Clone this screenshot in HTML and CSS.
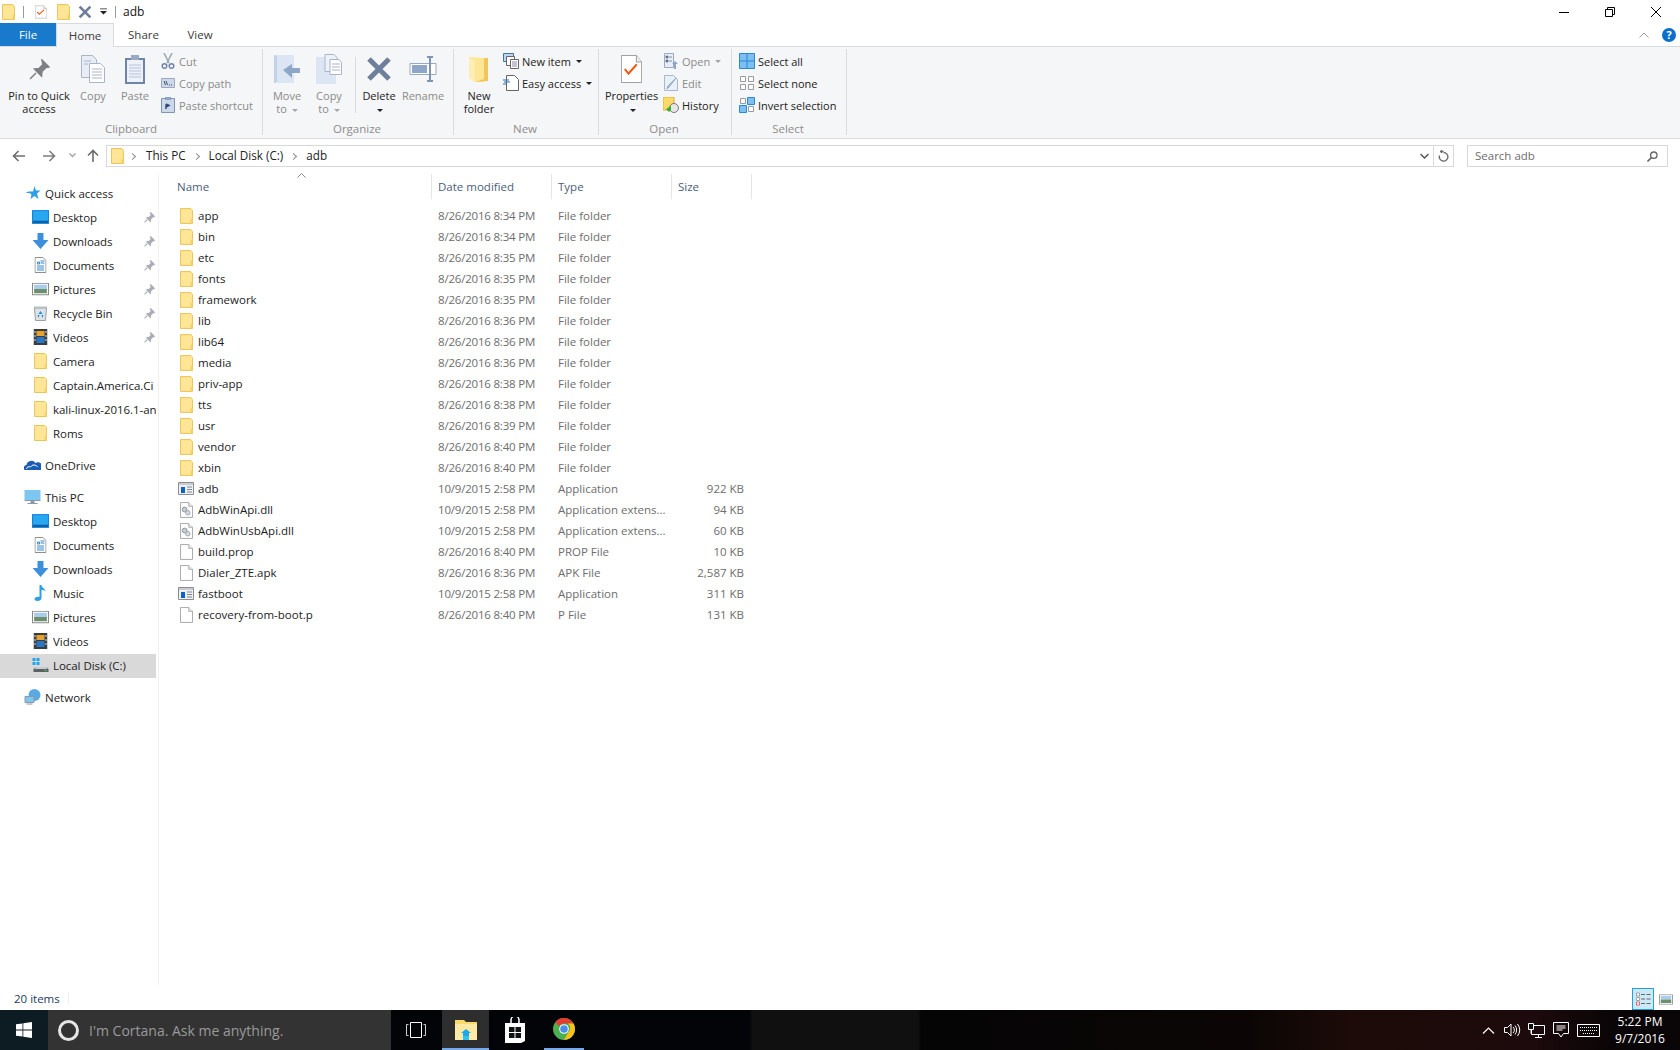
FILE: index.html
```html
<!DOCTYPE HTML>
<html>
<head>
<meta charset="utf-8" />
<title>adb</title>
<link rel="stylesheet" href="styles.css">
</head>
<body>
<svg class="defs" width="0" height="0">
	<symbol id="folder" viewBox="0 0 14 17">
		<path d="M.5.5h11l2 2v14H.5z" fill="#ffe596" stroke="#e8c04e"/>
		<path d="M11.5 11.5h2v5h-2z" fill="#f5d061"/>
	</symbol>
	<symbol id="file" viewBox="0 0 14 17">
		<path d="M.5.5h9l4 4v12H.5z" fill="#fff" stroke="#a3a3a3"/>
		<path d="M9.5.5v4h4" fill="#f0f0f0" stroke="#a3a3a3"/>
	</symbol>
	<symbol id="dll" viewBox="0 0 14 17">
		<path d="M.5.5h9l4 4v12H.5z" fill="#fff" stroke="#a3a3a3"/>
		<path d="M9.5.5v4h4" fill="#f0f0f0" stroke="#a3a3a3"/>
		<circle cx="5" cy="8" r="2.6" fill="#c5ccd4" stroke="#8a929a"/>
		<circle cx="8.4" cy="11.5" r="2.4" fill="#d5dbe2" stroke="#9aa2aa"/>
	</symbol>
	<symbol id="app" viewBox="0 0 16 13">
		<path d="M.5.5h15v12H.5z" fill="#eef0f2" stroke="#8d8d8d"/>
		<path d="M1 1h14v2H1z" fill="#c8ccd0"/>
		<path d="M3 5h4v6H3z" fill="#0a64c8"/>
		<path d="M9 5h5M9 7.5h5M9 10h5" stroke="#7d8a96"/>
	</symbol>
	<symbol id="desktop" viewBox="0 0 16 13">
		<path d="M0 0h16v13H0z" fill="#1383d6"/>
		<path d="M1 1h14v10H1z" fill="#27a8f0"/>
		<path d="M1 10h14v2H1z" fill="#0b5fa5"/>
	</symbol>
	<symbol id="down" viewBox="0 0 16 16">
		<path d="M5 0h6v7h5l-8 9-8-9h5z" fill="#3c8fdc"/>
	</symbol>
	<symbol id="docs" viewBox="0 0 12 16">
		<path d="M.5.5h8l3 3v12H.5z" fill="#fff" stroke="#8f8f8f"/>
		<path d="M3 5h2v2H3zM6 4h4M6 6h4M2.5 9h7M2.5 11h7M2.5 13h7" stroke="#3a87cf" fill="none"/>
	</symbol>
	<symbol id="pics" viewBox="0 0 16 12">
		<path d="M.5.5h15v11H.5z" fill="#fff" stroke="#8a8a8a"/>
		<path d="M2 2h12v4H2z" fill="#a9cdea"/>
		<path d="M2 6h12v4H2z" fill="#6d8f6d"/>
	</symbol>
	<symbol id="recycle" viewBox="0 0 14 16">
		<path d="M1 3h12l-1 12.5H2z" fill="#dfe3e6" stroke="#9a9fa5"/>
		<path d="M.5 1.5h13V3H.5z" fill="#b9bfc4"/>
		<path d="M7 6l2 3H5zM4 10h2l-1 3zM8 10h2l-1 3z" fill="#1f8fd8"/>
	</symbol>
	<symbol id="videos" viewBox="0 0 14 16">
		<path d="M0 0h14v16H0z" fill="#3a3d40"/>
		<path d="M3 2h8v5H3z" fill="#e8a32c"/>
		<path d="M3 8h8v6H3z" fill="#2877c5"/>
		<path d="M1 2h1v2H1zM1 6h1v2H1zM1 10h1v2H1zM12 2h1v2h-1zM12 6h1v2h-1zM12 10h1v2h-1z" fill="#ddd"/>
	</symbol>
	<symbol id="pin" viewBox="0 0 10 10">
		<path d="M6 .5L9.500 4 8 4.500l-2 2-.3 2-3.200-3.200 2-.3 2-2zM3 7L.5 9.500" fill="#a9aeb4" stroke="#a9aeb4"/>
	</symbol>
	<symbol id="big-x" viewBox="0 0 26 26">
		<path d="M3 3l20 20M23 3L3 23" stroke="#6d7f9a" stroke-width="5"/>
	</symbol>
	<symbol id="check-doc" viewBox="0 0 28 30">
		<path d="M.5.5h20l7 7v22H.5z" fill="#fff" stroke="#8d8d8d"/>
		<path d="M20.500.5v7h7" fill="#eee" stroke="#8d8d8d"/>
		<path d="M5 15l5 5 11-10" fill="none" stroke="#f05a14" stroke-width="2.500"/>
	</symbol>
</svg>

<div class="explorer">
	<div class="titlebar">
		<svg class="qa-folder"><use href="#folder"/></svg>
		<span class="qa-sep"></span>
		<svg class="qa-doc"><use href="#check-doc"/></svg>
		<svg class="qa-folder2"><use href="#folder"/></svg>
		<svg class="qa-x"><use href="#big-x"/></svg>
		<svg class="qa-drop" viewBox="0 0 8 7"><path d="M0 0h8v1H0zM0 3h8L4 7z" fill="#222"/></svg>
		<span class="qa-sep2"></span>
		<span class="title-text">adb</span>
		<div class="winbtns">
			<span class="winbtn"><svg width="10" height="10"><path d="M0 5.500h10" stroke="#000"/></svg></span>
			<span class="winbtn"><svg width="10" height="10"><path d="M.5 2.500h7v7h-7zM2.500 2.500v-2h7v7h-2" fill="none" stroke="#000"/></svg></span>
			<span class="winbtn"><svg width="10" height="10"><path d="M0 0l10 10M10 0L0 10" stroke="#000"/></svg></span>
		</div>
	</div>

	<div class="tabs">
		<span class="tab tab-file">File</span>
		<span class="tab tab-home">Home</span>
		<span class="tab tab-share">Share</span>
		<span class="tab tab-view">View</span>
		<span class="tabs-right">
			<svg width="10" height="6"><path d="M.5 5.500L5 1l4.500 4.500" fill="none" stroke="#a0a0a0"/></svg>
			<span class="help">?</span>
		</span>
	</div>

	<div class="ribbon">
		<div class="grp grp-clip">
			<div class="grp-body">
				<div class="big w-pin">
					<span class="ico"><svg width="21" height="21" viewBox="0 0 21 21"><path d="M13 1l7 7-3 .5-4 4-.5 4.500-7-7 4.500-.5 4-4zM7 14l-6 6" fill="#7d8184" stroke="#7d8184" stroke-width="1.500"/></svg></span>
					<span class="dark">Pin to Quick<br>access</span>
				</div>
				<div class="big w-copy">
					<span class="ico"><svg width="24" height="28" viewBox="0 0 24 28"><path d="M.5.5h11l4 4v18H.5z" fill="#e8edf5" stroke="#a9b4c6"/><path d="M8.500 8.500h11l4 4v15h-15z" fill="#fff" stroke="#a9b4c6"/><path d="M11 14h10M11 17h10M11 20h10M11 23h10M3 6h7M3 9h4" stroke="#a9b4c6"/></svg></span>
					<span>Copy</span>
				</div>
				<div class="big w-paste">
					<span class="ico"><svg width="20" height="29" viewBox="0 0 20 29"><path d="M0 3h20v26H0z" fill="#6f85a8"/><path d="M2 5h16v22H2z" fill="#eef2f8"/><path d="M6 0h8v5H6z" fill="#9aa9c0"/><path d="M4 10h12M4 13h12M4 16h12M4 19h12M4 22h12" stroke="#b6c3d8"/></svg></span>
					<span>Paste</span>
				</div>
				<div class="smallcol">
					<div class="small"><svg width="14" height="16" viewBox="0 0 14 16"><path d="M3 0l5 10M11 0L6 10" stroke="#9aa4b2" stroke-width="1.500"/><circle cx="3.500" cy="13" r="2.300" fill="none" stroke="#6f85a8" stroke-width="1.500"/><circle cx="10.500" cy="13" r="2.300" fill="none" stroke="#6f85a8" stroke-width="1.500"/></svg>Cut</div>
					<div class="small"><svg width="14" height="10" viewBox="0 0 14 10"><path d="M.5.5h13v9H.5z" fill="#cdd8ea" stroke="#9aa9c0"/><path d="M3 3l1.500 4M5 3l1.500 4M8 7h1M10 7h1" stroke="#44546a"/></svg>Copy path</div>
					<div class="small"><svg width="14" height="16" viewBox="0 0 14 16"><path d="M.5 1.500h13v14H.5z" fill="#cdd8ea" stroke="#7f93b2"/><path d="M4 0h6v3H4z" fill="#8fa2be"/><path d="M5 12V8h3M6 7.500l2 1-2 1z" stroke="#2f4a74" fill="none" stroke-width="1.500"/></svg>Paste shortcut</div>
				</div>
			</div>
			<div class="grp-label">Clipboard</div>
		</div>

		<div class="grp grp-org">
			<div class="grp-body">
				<div class="big w-move">
					<span class="ico"><svg width="26" height="28" viewBox="0 0 26 28"><path d="M0 0h20v28H0z" fill="#dbe5f3"/><path d="M0 0l3 1v26l-3 1z" fill="#c3d2e8"/><path d="M26 18h-8v5l-9-8 9-6v4h8z" fill="#8ea6c8"/></svg></span>
					<span>Move<br>to <i class="caret"></i></span>
				</div>
				<div class="big w-move">
					<span class="ico"><svg width="26" height="30" viewBox="0 0 26 30"><path d="M0 3h20v27H0z" fill="#dbe5f3"/><path d="M9 .5h9l3 3v14H9z" fill="#eef2f8" stroke="#a9b4c6"/><path d="M14 5.500h9l2.500 3v12H14z" fill="#fff" stroke="#a9b4c6"/><path d="M16 10h8M16 13h8M16 16h8" stroke="#a9b4c6"/></svg></span>
					<span>Copy<br>to <i class="caret"></i></span>
				</div>
				<span class="inner-sep"></span>
				<div class="big w-del">
					<span class="ico"><svg width="26" height="26"><use href="#big-x"/></svg></span>
					<span class="dark">Delete<br><i class="caret dark-caret"></i></span>
				</div>
				<div class="big w-move">
					<span class="ico"><svg width="28" height="26" viewBox="0 0 28 26"><path d="M1 7.500h26v11H1z" fill="#fff" stroke="#9aa9c0"/><path d="M3 9h15v8H3z" fill="#8ea6c8"/><path d="M18 1h6M18 25h6M21 1v24" stroke="#7f93b2" stroke-width="2"/></svg></span>
					<span>Rename</span>
				</div>
			</div>
			<div class="grp-label">Organize</div>
		</div>

		<div class="grp grp-new">
			<div class="grp-body">
				<div class="big w-newf">
					<span class="ico"><svg width="20" height="27" viewBox="0 0 20 27"><path d="M0 1l15 1v24H6l-6-4z" fill="#ffe596"/><path d="M15 2h4v23l-13 1 9-3z" fill="#f0c658"/><path d="M0 1l6 4v21l-6-4z" fill="#ffeeb4"/></svg></span>
					<span class="dark">New<br>folder</span>
				</div>
				<div class="smallcol">
					<div class="small dark"><svg width="16" height="16" viewBox="0 0 16 16"><path d="M.5.5h10v8H.5z" fill="#bcd8f0" stroke="#44729c"/><path d="M3.500 3.500h8v9h-8z" fill="#fff" stroke="#666"/><path d="M7.500 6.500h8v9h-8z" fill="#fff" stroke="#666"/><path d="M9 9h5M9 11h5M9 13h5" stroke="#88a"/></svg>New item <i class="caret dark-caret"></i></div>
					<div class="small dark"><svg width="16" height="16" viewBox="0 0 16 16"><path d="M3.500.5h8l4 4v11h-12z" fill="#fff" stroke="#666"/><path d="M0 5h6M1 7h6M0 9h4" stroke="#2f6fb0"/></svg>Easy access <i class="caret dark-caret"></i></div>
				</div>
			</div>
			<div class="grp-label">New</div>
		</div>

		<div class="grp grp-open">
			<div class="grp-body">
				<div class="big w-prop">
					<span class="ico"><svg width="21" height="28" viewBox="0 0 28 30" preserveAspectRatio="none"><use href="#check-doc"/></svg></span>
					<span class="dark">Properties<br><i class="caret dark-caret"></i></span>
				</div>
				<div class="smallcol">
					<div class="small"><svg width="14" height="16" viewBox="0 0 14 16"><path d="M.5.500h9v14h-9z" fill="#e8edf5" stroke="#9aa9c0"/><path d="M2 3h2v2H2zM2 7h2v2H2zM5 4h3M5 8h3" stroke="#7f93b2"/><path d="M11 8l3 3h-2v5h-2v-5H8z" fill="#8ea6c8"/></svg>Open <i class="caret"></i></div>
					<div class="small"><svg width="14" height="16" viewBox="0 0 14 16"><path d="M.5.5h9l4 4v11H.5z" fill="#eaf0f8" stroke="#a9b8d0"/><path d="M12 3L5 12l-2 2 1-3z" fill="#b9c8de" stroke="#8ea6c8"/></svg>Edit</div>
					<div class="small dark"><svg width="16" height="16" viewBox="0 0 16 16"><path d="M0 0h11v13H0z" fill="#ffd966" stroke="#d6ae3c"/><circle cx="11" cy="11" r="4.500" fill="#e6e6e6" stroke="#777"/><path d="M8 9l-5 3 3 3 2-2" fill="#3aa935"/></svg>History</div>
				</div>
			</div>
			<div class="grp-label">Open</div>
		</div>

		<div class="grp grp-sel">
			<div class="grp-body">
				<div class="smallcol">
					<div class="small dark"><svg width="16" height="16" viewBox="0 0 16 16"><path d="M.5.5h15v15H.5zM8 0v16M0 8h16" fill="#7cc0f0" stroke="#2b87d8"/></svg>Select all</div>
					<div class="small dark"><svg width="16" height="16" viewBox="0 0 16 16"><path d="M1.500 1.500h5v5h-5zM9.500 1.500h5v5h-5zM1.500 9.500h5v5h-5zM9.500 9.500h5v5h-5z" fill="#fff" stroke="#9a9a9a"/></svg>Select none</div>
					<div class="small dark"><svg width="16" height="16" viewBox="0 0 16 16"><path d="M1.500 1.500h5v5h-5zM9.500 9.500h5v5h-5z" fill="#fff" stroke="#9a9a9a"/><path d="M8.500.5h7v7h-7zM.5 8.500h7v7h-7z" fill="#7cc0f0" stroke="#2b87d8"/></svg>Invert selection</div>
				</div>
			</div>
			<div class="grp-label">Select</div>
		</div>
	</div>

	<div class="addrrow">
		<div class="navbtns">
			<svg class="nb-back" width="14" height="12" viewBox="0 0 14 12"><path d="M13 6H2M6.500 1L1.500 6l5 5" fill="none" stroke="#6d6d6d" stroke-width="1.600"/></svg>
			<svg class="nb-fwd" width="14" height="12" viewBox="0 0 14 12"><path d="M1 6h11M7.500 1l5 5-5 5" fill="none" stroke="#7d7d7d" stroke-width="1.600"/></svg>
			<svg class="nb-down" width="7" height="5" viewBox="0 0 7 5"><path d="M.5.500l3 3 3-3" fill="none" stroke="#a0a0a0" stroke-width="1.300"/></svg>
			<svg class="nb-up" width="12" height="14" viewBox="0 0 12 14"><path d="M6 13V2M1 6.500l5-5 5 5" fill="none" stroke="#6d6d6d" stroke-width="1.600"/></svg>
		</div>
		<div class="addrbox">
			<svg class="addr-folder"><use href="#folder"/></svg>
			<i class="crumb-sep first"></i><span class="crumb">This PC</span>
			<i class="crumb-sep"></i><span class="crumb">Local Disk (C:)</span>
			<i class="crumb-sep"></i><span class="crumb">adb</span>
			<span class="addr-fill"></span>
			<svg class="addr-chev" width="9" height="6" viewBox="0 0 9 6"><path d="M.5 1l4 4 4-4" fill="none" stroke="#555" stroke-width="1.500"/></svg>
			<span class="addr-refresh"><svg width="11" height="12" viewBox="0 0 11 12"><path d="M2 1.500h3.500M3.500 0v3M5.500 2.500a4.300 4.300 0 1 1-4 3" fill="none" stroke="#6d6d6d" stroke-width="1.400"/></svg></span>
		</div>
		<div class="searchbox">
			<span>Search adb</span>
			<svg width="11" height="11" viewBox="0 0 11 11"><circle cx="6.800" cy="4.200" r="3.200" fill="none" stroke="#666" stroke-width="1.300"/><path d="M4.500 6.500L.5 10.500" stroke="#666" stroke-width="1.600"/></svg>
		</div>
	</div>

	<div class="main">
		<div class="navpane">
			<div class="navgroup">
				<div class="nav top"><svg viewBox="0 0 16 16"><path d="M10 1l1.500 4.500H16L12.500 8.500 14 14l-4-3-4 3 1-4.500-2-1.500H1l3-1.500h4.500z" fill="#2e9fe6"/></svg>Quick access</div>
				<div class="nav"><svg viewBox="0 0 16 13"><use href="#desktop"/></svg><span>Desktop</span><svg class="pin"><use href="#pin"/></svg></div>
				<div class="nav"><svg viewBox="0 0 16 16"><use href="#down"/></svg><span>Downloads</span><svg class="pin"><use href="#pin"/></svg></div>
				<div class="nav"><svg viewBox="0 0 12 16"><use href="#docs"/></svg><span>Documents</span><svg class="pin"><use href="#pin"/></svg></div>
				<div class="nav"><svg viewBox="0 0 16 12"><use href="#pics"/></svg><span>Pictures</span><svg class="pin"><use href="#pin"/></svg></div>
				<div class="nav"><svg viewBox="0 0 14 16"><use href="#recycle"/></svg><span>Recycle Bin</span><svg class="pin"><use href="#pin"/></svg></div>
				<div class="nav"><svg viewBox="0 0 14 16"><use href="#videos"/></svg><span>Videos</span><svg class="pin"><use href="#pin"/></svg></div>
				<div class="nav"><svg viewBox="0 0 14 17"><use href="#folder"/></svg><span>Camera</span></div>
				<div class="nav"><svg viewBox="0 0 14 17"><use href="#folder"/></svg><span>Captain.America.Ci</span></div>
				<div class="nav"><svg viewBox="0 0 14 17"><use href="#folder"/></svg><span>kali-linux-2016.1-an</span></div>
				<div class="nav"><svg viewBox="0 0 14 17"><use href="#folder"/></svg><span>Roms</span></div>
			</div>
			<div class="navgroup">
				<div class="nav top"><svg viewBox="0 0 16 16"><path d="M0 13a3 3 0 0 1 2-5 5 5 0 0 1 9-2 4 4 0 0 1 5 7z" fill="#1a5bb5"/><path d="M2 12a3 3 0 0 1 4-2 4 4 0 0 1 7 0" fill="none" stroke="#fff"/></svg>OneDrive</div>
			</div>
			<div class="navgroup">
				<div class="nav top"><svg viewBox="0 0 16 16"><path d="M0 1h16v10H0z" fill="#7cc6ef"/><path d="M0 11h16v1H0zM6 12h4v2H6z" fill="#8a9aa8"/><path d="M3 14.500h10" stroke="#8a9aa8"/></svg>This PC</div>
				<div class="nav"><svg viewBox="0 0 16 13"><use href="#desktop"/></svg><span>Desktop</span></div>
				<div class="nav"><svg viewBox="0 0 12 16"><use href="#docs"/></svg><span>Documents</span></div>
				<div class="nav"><svg viewBox="0 0 16 16"><use href="#down"/></svg><span>Downloads</span></div>
				<div class="nav"><svg viewBox="0 0 16 16"><path d="M7 0h2c0 3 4 3 4 7-1-2-2-2-4-2v8c0 2-2 3-4 3s-3-1-3-2 2-3 5-2z" fill="#2ba0e8"/></svg><span>Music</span></div>
				<div class="nav"><svg viewBox="0 0 16 12"><use href="#pics"/></svg><span>Pictures</span></div>
				<div class="nav"><svg viewBox="0 0 14 16"><use href="#videos"/></svg><span>Videos</span></div>
				<div class="nav selected"><svg viewBox="0 0 16 16"><path d="M0 1h3v3H0zM4 1h3v3H4zM0 5h3v3H0zM4 5h3v3H4z" fill="#1ea7ee"/><path d="M1 12l2-2h11l2 2v3H1z" fill="#5d6266"/><path d="M3 10h11l1 2H2z" fill="#c9ccce"/><path d="M12 13h2v1h-2z" fill="#3ed03e"/></svg><span>Local Disk (C:)</span></div>
			</div>
			<div class="navgroup">
				<div class="nav top"><svg viewBox="0 0 16 16"><circle cx="10" cy="6" r="6" fill="#5aa9e0"/><path d="M.5 7.500h9v6h-9z" fill="#7cc6ef" stroke="#8a9aa8"/><path d="M2 15h6" stroke="#8a9aa8"/></svg>Network</div>
			</div>
		</div>

		<div class="files">
			<div class="filehead">
				<span class="col col-name">Name<svg class="sort" width="9" height="5" viewBox="0 0 9 5"><path d="M.5 4.500l4-4 4 4" fill="none" stroke="#8a8a8a"/></svg></span>
				<span class="col col-date">Date modified</span>
				<span class="col col-type">Type</span>
				<span class="col col-size">Size</span>
			</div>
			<div class="filelist">
				<div class="row"><span class="col-name"><svg><use href="#folder"/></svg>app</span><span class="col-date">8/26/2016 8:34 PM</span><span class="col-type">File folder</span><span class="col-size"></span></div>
				<div class="row"><span class="col-name"><svg><use href="#folder"/></svg>bin</span><span class="col-date">8/26/2016 8:34 PM</span><span class="col-type">File folder</span><span class="col-size"></span></div>
				<div class="row"><span class="col-name"><svg><use href="#folder"/></svg>etc</span><span class="col-date">8/26/2016 8:35 PM</span><span class="col-type">File folder</span><span class="col-size"></span></div>
				<div class="row"><span class="col-name"><svg><use href="#folder"/></svg>fonts</span><span class="col-date">8/26/2016 8:35 PM</span><span class="col-type">File folder</span><span class="col-size"></span></div>
				<div class="row"><span class="col-name"><svg><use href="#folder"/></svg>framework</span><span class="col-date">8/26/2016 8:35 PM</span><span class="col-type">File folder</span><span class="col-size"></span></div>
				<div class="row"><span class="col-name"><svg><use href="#folder"/></svg>lib</span><span class="col-date">8/26/2016 8:36 PM</span><span class="col-type">File folder</span><span class="col-size"></span></div>
				<div class="row"><span class="col-name"><svg><use href="#folder"/></svg>lib64</span><span class="col-date">8/26/2016 8:36 PM</span><span class="col-type">File folder</span><span class="col-size"></span></div>
				<div class="row"><span class="col-name"><svg><use href="#folder"/></svg>media</span><span class="col-date">8/26/2016 8:36 PM</span><span class="col-type">File folder</span><span class="col-size"></span></div>
				<div class="row"><span class="col-name"><svg><use href="#folder"/></svg>priv-app</span><span class="col-date">8/26/2016 8:38 PM</span><span class="col-type">File folder</span><span class="col-size"></span></div>
				<div class="row"><span class="col-name"><svg><use href="#folder"/></svg>tts</span><span class="col-date">8/26/2016 8:38 PM</span><span class="col-type">File folder</span><span class="col-size"></span></div>
				<div class="row"><span class="col-name"><svg><use href="#folder"/></svg>usr</span><span class="col-date">8/26/2016 8:39 PM</span><span class="col-type">File folder</span><span class="col-size"></span></div>
				<div class="row"><span class="col-name"><svg><use href="#folder"/></svg>vendor</span><span class="col-date">8/26/2016 8:40 PM</span><span class="col-type">File folder</span><span class="col-size"></span></div>
				<div class="row"><span class="col-name"><svg><use href="#folder"/></svg>xbin</span><span class="col-date">8/26/2016 8:40 PM</span><span class="col-type">File folder</span><span class="col-size"></span></div>
				<div class="row"><span class="col-name"><svg class="wide" viewBox="0 0 16 13"><use href="#app"/></svg>adb</span><span class="col-date">10/9/2015 2:58 PM</span><span class="col-type">Application</span><span class="col-size">922 KB</span></div>
				<div class="row"><span class="col-name"><svg><use href="#dll"/></svg>AdbWinApi.dll</span><span class="col-date">10/9/2015 2:58 PM</span><span class="col-type">Application extens...</span><span class="col-size">94 KB</span></div>
				<div class="row"><span class="col-name"><svg><use href="#dll"/></svg>AdbWinUsbApi.dll</span><span class="col-date">10/9/2015 2:58 PM</span><span class="col-type">Application extens...</span><span class="col-size">60 KB</span></div>
				<div class="row"><span class="col-name"><svg><use href="#file"/></svg>build.prop</span><span class="col-date">8/26/2016 8:40 PM</span><span class="col-type">PROP File</span><span class="col-size">10 KB</span></div>
				<div class="row"><span class="col-name"><svg><use href="#file"/></svg>Dialer_ZTE.apk</span><span class="col-date">8/26/2016 8:36 PM</span><span class="col-type">APK File</span><span class="col-size">2,587 KB</span></div>
				<div class="row"><span class="col-name"><svg class="wide" viewBox="0 0 16 13"><use href="#app"/></svg>fastboot</span><span class="col-date">10/9/2015 2:58 PM</span><span class="col-type">Application</span><span class="col-size">311 KB</span></div>
				<div class="row"><span class="col-name"><svg><use href="#file"/></svg>recovery-from-boot.p</span><span class="col-date">8/26/2016 8:40 PM</span><span class="col-type">P File</span><span class="col-size">131 KB</span></div>
			</div>
		</div>
	</div>

	<div class="statusbar">
		<span class="count">20 items</span>
		<span class="status-fill"></span>
		<span class="view-btn on"><svg width="16" height="14" viewBox="0 0 16 14"><path d="M1.500 1h3v3h-3zM1.500 5.500h3v3h-3z" fill="#fff" stroke="#888" stroke-width=".7"/><path d="M1.500 10h3v3h-3z" fill="#fff" stroke="#d33" stroke-width=".7"/><path d="M6 2.500h4M11.500 2.500h4M6 7h4M11.500 7h4M6 11.500h4M11.500 11.500h4" stroke="#666"/></svg></span>
		<span class="view-btn"><svg width="14" height="11" viewBox="0 0 16 12"><use href="#pics"/></svg></span>
	</div>
</div>

<div class="taskbar">
	<span class="start"><svg width="16" height="16" viewBox="0 0 16 16"><path d="M0 2.300l6.500-.9v6.200H0zM7.300 1.300L16 0v7.600H7.300zM0 8.400h6.500v6.200L0 13.700zM7.300 8.400H16V16l-8.700-1.300z" fill="#fff"/></svg></span>
	<div class="cortana">
		<span class="ring"></span>
		<span>I'm Cortana. Ask me anything.</span>
	</div>
	<span class="tb-btn tb-view"><svg width="20" height="16" viewBox="0 0 20 16"><path d="M4.500.5h11v15h-11z" fill="none" stroke="#fff"/><path d="M2.500 2.500H.5v11h2M17.500 2.500h2v11h-2" fill="none" stroke="#ccc"/></svg></span>
	<span class="tb-btn tb-explorer"><svg width="22" height="21" viewBox="0 0 22 21"><path d="M0 1h9l2 2h11v18H0z" fill="#f9d86c"/><path d="M0 5h22v16H0z" fill="#ffe9a4"/><path d="M6 14l5-4 5 4h-2v7H8v-7z" fill="#1ea7e8"/><path d="M8 17h6v4H8z" fill="#29c3f4"/></svg></span>
	<span class="tb-btn tb-store"><svg width="20" height="26" viewBox="0 0 20 26"><path d="M6 7V3a4 4 0 0 1 8 0v4" fill="none" stroke="#fff" stroke-width="1.500"/><path d="M0 6h20v18l-4 2H0z" fill="#fff"/><path d="M4 10h5.500v5H4zM10.500 10H16v5h-5.500zM4 16h5.500v5H4zM10.500 16H16v5h-5.500z" fill="#111"/></svg></span>
	<span class="tb-btn tb-chrome"><svg width="22" height="22" viewBox="0 0 22 22"><circle cx="11" cy="11" r="11" fill="#4caf50"/><path d="M11 0a11 11 0 0 1 9.500 5.500H11a5.500 5.500 0 0 0-5 3L2.500 3.800A11 11 0 0 1 11 0z" fill="#e53b30"/><path d="M20.500 5.500A11 11 0 0 1 11 22l4.700-8.300A5.500 5.500 0 0 0 15 5.500z" fill="#fbc116"/><circle cx="11" cy="11" r="4.800" fill="#fff"/><circle cx="11" cy="11" r="3.800" fill="#4a8cf0"/></svg></span>
	<span class="tb-fill"></span>
	<div class="tray">
		<svg class="tr-up" width="13" height="7" viewBox="0 0 13 7"><path d="M1 6.500L6.500 1 12 6.500" fill="none" stroke="#fff" stroke-width="1.200"/></svg>
		<svg class="tr-vol" width="17" height="14" viewBox="0 0 17 14"><path d="M.5 4.500h3L7 1v12L3.500 9.500h-3zM9 4a4 4 0 0 1 0 6M11 2.500a7 7 0 0 1 0 9M13.500 1a10 10 0 0 1 0 12" fill="none" stroke="#fff"/></svg>
		<svg class="tr-net" width="17" height="15" viewBox="0 0 17 15"><path d="M3.500 2.500h13v9h-13zM7 14.500h7M10.500 11.500v3" fill="none" stroke="#fff"/><path d="M.5.500h5v6h-5zM3 6.500v4" fill="#111" stroke="#fff"/></svg>
		<svg class="tr-msg" width="16" height="16" viewBox="0 0 16 16"><path d="M.5.500h15v11h-5L8 15l-2.500-3.500h-5zM3.500 4h9M3.500 6h9M3.500 8h6" fill="none" stroke="#fff"/></svg>
		<svg class="tr-kbd" width="23" height="13" viewBox="0 0 23 13"><path d="M.5.500h22v12H.5z" fill="none" stroke="#fff"/><path d="M3 3.500h17M3 6.500h17M6 9.500h11" stroke="#fff" stroke-dasharray="1 1"/></svg>
		<div class="clock">5:22 PM<br>9/7/2016</div>
	</div>
</div>
</body>
</html>
```
FILE: styles.css
```css
html,body{margin:0;padding:0;height:100%;overflow:hidden;}
body{
	font-family:"Open Sans","Noto Sans","Liberation Sans",sans-serif;
	font-size:11.5px;
	color:#1c1c1c;
	background:#fff;
}
.defs{position:absolute;}
svg{display:block;flex:none;}
i{font-style:normal;}

.explorer{height:1010px;display:flex;flex-direction:column;}

/* title bar */
.titlebar{height:23px;display:flex;align-items:center;flex:none;}
.qa-folder{width:13px;height:16px;margin-left:2px;}
.qa-sep{width:1px;height:12px;background:#9a9a9a;margin-left:8px;}
.qa-doc{width:12px;height:16px;margin-left:11px;}
.qa-folder2{width:13px;height:16px;margin-left:10px;}
.qa-x{width:14px;height:14px;margin-left:8px;}
.qa-drop{width:7px;height:7px;margin-left:8px;}
.qa-sep2{width:1px;height:12px;background:#9a9a9a;margin-left:8px;}
.title-text{margin-left:7px;font-size:12px;color:#111;}
.winbtns{margin-left:auto;display:flex;height:100%;padding-right:1px;}
.winbtn{width:46px;display:flex;align-items:center;justify-content:center;}

/* tabs */
.tabs{height:23px;display:flex;flex:none;align-items:stretch;border-bottom:1px solid #dadbdc;position:relative;}
.tab{display:flex;align-items:center;justify-content:center;color:#3b3b3b;}
.tab-file{width:56px;background:#1979ca;color:#fff;}
.tab-home{width:56px;background:#f5f6f7;border:1px solid #dadbdc;border-bottom:0;margin-bottom:-1px;}
.tab-share{width:59px;}
.tab-view{width:54px;}
.tabs-right{margin-left:auto;display:flex;align-items:center;gap:13px;padding-right:4px;}
.help{width:14px;height:14px;border-radius:50%;background:#0d6fc9;color:#fff;font-weight:700;font-size:11px;line-height:14px;text-align:center;}

/* ribbon */
.ribbon{height:91px;flex:none;display:flex;background:#f5f6f7;border-bottom:1px solid #dadbdc;font-size:11px;}
.grp{display:flex;flex-direction:column;margin-top:2px;height:86px;border-right:1px solid #dadbdc;box-sizing:border-box;color:#8a8a8a;}
.grp-clip{width:263px;}
.grp-org{width:191px;}
.grp-new{width:145px;}
.grp-open{width:133px;}
.grp-sel{width:115px;}
.grp-body{height:73px;display:flex;padding-left:4px;}
.grp-org .grp-body{padding-left:3px;}
.grp-new .grp-body{padding-left:5px;}
.grp-sel .grp-body{padding-left:3px;}
.grp-label{height:13px;line-height:14px;text-align:center;font-size:11.5px;color:#8d8d8d;padding-right:2px;}
.grp-clip .grp-label{padding-right:0;}
.big{display:flex;flex-direction:column;align-items:center;line-height:13px;text-align:center;}
.ico{height:40px;display:flex;align-items:center;justify-content:center;}
.big span{color:#8a8a8a;white-space:nowrap;}
.big span.dark,.small.dark{color:#222;}
.w-pin{width:70px;}
.w-copy{width:38px;}
.w-paste{width:46px;}
.w-move{width:42px;}
.w-del{width:46px;}
.w-newf{width:40px;}
.w-prop{width:57px;}
.inner-sep{width:1px;height:56px;background:#dadbdc;margin:8px 0 0 5px;}
.smallcol{display:flex;flex-direction:column;padding-top:1px;padding-left:2px;}
.grp-new .smallcol{padding-left:4px;}
.grp-open .smallcol{padding-left:3px;}
.grp-sel .smallcol{padding-left:4px;}
.small{height:22px;display:flex;align-items:center;gap:3px;white-space:nowrap;color:#8a8a8a;}
.small svg{width:16px;}
.caret{display:inline-block;width:0;height:0;border:3px solid transparent;border-top:3px solid #a5a5a5;border-bottom:0;vertical-align:middle;margin-left:2px;}
.dark-caret{border-top-color:#222;}

/* address row */
.addrrow{height:34px;flex:none;display:flex;align-items:flex-start;padding-top:6px;box-sizing:border-box;}
.navbtns{width:106px;flex:none;display:flex;align-items:center;height:21px;}
.nb-back{margin-left:12px;}
.nb-fwd{margin-left:16px;}
.nb-down{margin-left:13px;}
.nb-up{margin-left:11px;}
.addrbox{width:1348px;height:22px;border:1px solid #d9d9d9;box-sizing:border-box;display:flex;align-items:center;}
.addr-folder{width:13px;height:16px;margin-left:4px;}
.crumb-sep{width:4px;height:4px;border-top:1.5px solid #8c8c8c;border-right:1.5px solid #8c8c8c;transform:rotate(45deg);margin:0 10px 0 8px;}
.crumb-sep.first{margin:0 11px 0 6px;}
.crumb{color:#222;font-size:11.7px;padding-bottom:2px;}
.addr-fill{flex:1;}
.addr-chev{margin-right:4px;}
.addr-refresh{width:19px;height:20px;border-left:1px solid #d9d9d9;display:flex;align-items:center;justify-content:center;}
.searchbox{width:201px;height:22px;margin-left:13px;border:1px solid #d9d9d9;box-sizing:border-box;display:flex;align-items:center;justify-content:space-between;padding:0 9px 0 7px;color:#6d6d6d;}
.searchbox span{padding-bottom:1px;}

/* main */
.main{flex:1;display:flex;min-height:0;}
.navpane{width:158px;flex:none;border-right:1px solid #f0f0f0;padding-top:9px;margin-bottom:3px;}
.navgroup{margin-bottom:8px;}
.nav{height:24px;display:flex;align-items:center;padding:0 0 2px 32px;color:#1c1c1c;white-space:nowrap;overflow:hidden;width:156px;box-sizing:border-box;}
.nav>svg:first-child{width:17px;height:16px;margin-right:4px;}
.nav span{overflow:hidden;width:103px;letter-spacing:-.05px;}
.nav.top{padding-left:24px;}
.nav .pin{width:11px;height:11px;margin-left:-12px;}
.nav.selected{background:#d9d9d9;}

.files{flex:1;}
.filehead{height:27px;display:flex;padding-top:1px;color:#4c607a;box-sizing:border-box;}
.filehead .col{height:25px;display:flex;align-items:center;border-right:1px solid #e5e5e5;box-sizing:border-box;position:relative;}
.col-name{width:273px;padding-left:18px;box-sizing:border-box;}
.col-date{width:120px;padding-left:6px;box-sizing:border-box;}
.col-type{width:120px;padding-left:6px;box-sizing:border-box;}
.col-size{width:80px;padding-right:8px;text-align:right;box-sizing:border-box;}
.filehead .col-size{padding-left:6px;text-align:left;}
.sort{position:absolute;left:138px;top:-1px;}
.filelist{padding-top:5px;}
.row{height:21px;display:flex;align-items:center;color:#6d6d6d;}
.row .col-date{letter-spacing:-.2px;}
.row .col-name{display:flex;align-items:center;color:#1c1c1c;padding-left:21px;white-space:nowrap;}
.row .col-name svg{width:13px;height:16px;margin-right:5px;}
.row .col-name svg.wide{width:16px;height:13px;margin:0 4px 0 -2px;}

.statusbar{height:22px;flex:none;display:flex;align-items:center;color:#1c3a5a;}
.count{padding-left:14px;width:54px;border-right:1px solid #eee;height:12px;line-height:12px;}
.status-fill{flex:1;}
.view-btn{width:22px;height:22px;display:flex;align-items:center;justify-content:center;box-sizing:border-box;margin-right:2px;}
.view-btn:last-child{width:20px;margin-right:4px;}
.view-btn.on{background:#cbe8f6;border:1px solid #26a0da;}

/* taskbar */
.taskbar{height:40px;display:flex;align-items:stretch;color:#fff;background:linear-gradient(90deg,#020408 0,#020408 750px,#101010 752px,#101010 918px,#050505 921px,#0b0605 1250px,#1c0b08 1350px,#1d0a0c 1530px,#0a0506 1610px);}
.start{width:48px;display:flex;align-items:center;justify-content:center;background:#0d1b22;}
.cortana{width:343px;background:#333;display:flex;align-items:center;color:#9a9a9a;font-size:14px;}
.ring{width:15px;height:15px;border:3px solid #e6e6e6;border-radius:50%;margin:0 10px 0 10px;}
.tb-btn{display:flex;align-items:center;justify-content:center;box-sizing:border-box;}
.tb-view{width:51px;padding-right:2px;}
.tb-explorer{width:47px;background:#2e2e2e;border-bottom:2px solid #76a9ea;}
.tb-store{width:55px;padding-right:3px;}
.tb-chrome{width:40px;border-bottom:2px solid #76a9ea;}
.tb-fill{flex:1;}
.tray{display:flex;align-items:center;gap:9px;padding-right:8px;}
.tr-net{margin-left:-2px;}
.tr-msg{margin-left:-1px;}
.tr-kbd{margin-left:-1px;}
.clock{width:64px;margin-left:-1px;text-align:center;font-size:12px;line-height:17px;}
```
